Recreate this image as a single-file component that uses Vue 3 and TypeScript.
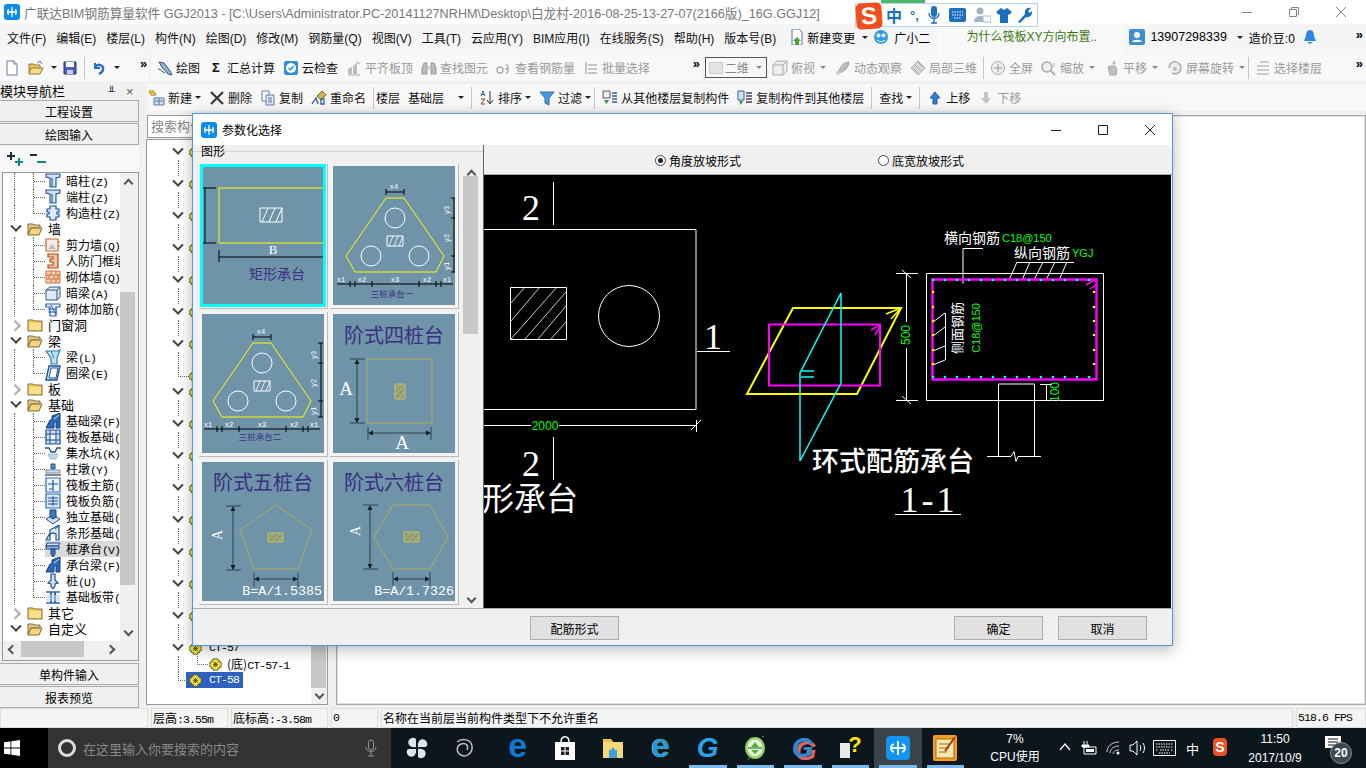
<template>
  <div class="app">
    <!-- shared icon sheet -->
    <svg class="sheet" width="0" height="0">
      <symbol id="doc" viewBox="0 0 16 16"><path d="M3 1h7l3 3v11H3z" fill="#fff" stroke="#6d7f99"/><path d="M10 1v3h3" fill="#dde" stroke="#6d7f99"/></symbol>
      <symbol id="open" viewBox="0 0 16 16"><path d="M1 4h5l1 1h5v8H1z" fill="#e8c064" stroke="#9a7a2c"/><path d="M3 8h12l-3 6H1z" fill="#f5dc8e" stroke="#9a7a2c"/><path d="M9 3l3-2 2 3" fill="none" stroke="#4a78b8"/></symbol>
      <symbol id="save" viewBox="0 0 16 16"><path d="M2 2h12v12H2z" fill="#4a5fb8" stroke="#27357a"/><path d="M4 2h8v5H4z" fill="#fff"/><path d="M5 10h6v4H5z" fill="#c9d0e8"/></symbol>
      <symbol id="undo" viewBox="0 0 16 16"><path d="M4 3v5h5" fill="none" stroke="#2e6fc0" stroke-width="2"/><path d="M4 7c3-4 9-2 8 3-.4 2-2 3-4 4" fill="none" stroke="#2e6fc0" stroke-width="2.4"/></symbol>
      <symbol id="draw" viewBox="0 0 16 16"><path d="M2 2l5 1 6 8 2 4-4-1-6-7z" fill="#8fb3dc" stroke="#36537c"/><path d="M1 9c3 0 4 3 7 4" fill="none" stroke="#36537c"/></symbol>
      <symbol id="cloud" viewBox="0 0 16 16"><rect x="1" y="1" width="14" height="14" rx="2" fill="#2f8fd8"/><circle cx="8" cy="8" r="5" fill="#fff"/><path d="M5.500 8l2 2 3-4" fill="none" stroke="#2f8fd8" stroke-width="1.400"/></symbol>
      <symbol id="align" viewBox="0 0 16 16"><path d="M2 9l4-2v7H2zM7 6l4-3v11H7z" fill="#bbb"/><path d="M2 15h12M10 2l4 2" stroke="#aaa" fill="none"/></symbol>
      <symbol id="binoc" viewBox="0 0 16 16"><path d="M3 3h3v11H1V8zM10 3h3l2 5v6h-5z" fill="#bbb" stroke="#999"/><path d="M6 6h4v3H6z" fill="#ccc"/></symbol>
      <symbol id="rebar" viewBox="0 0 16 16"><circle cx="4" cy="10" r="3" fill="none" stroke="#aaa" stroke-width="1.400"/><path d="M10 5c3 0 3 8 0 8M9 9h3" fill="none" stroke="#aaa" stroke-width="1.400"/></symbol>
      <symbol id="batch" viewBox="0 0 16 16"><path d="M2 2h2v12H2zM5 4h9v2H5zM5 8h9v2H5zM5 12h9v2H5z" fill="#c4c4c4"/></symbol>
      <symbol id="box3d" viewBox="0 0 16 16"><path d="M1 5l4-4h10v10l-4 4H1z" fill="#eee" stroke="#aaa"/><path d="M1 5h10v10M11 5l4-4" fill="none" stroke="#aaa"/></symbol>
      <symbol id="orbit" viewBox="0 0 16 16"><path d="M3 13C5 6 9 2 14 2c0 5-4 10-11 11z" fill="#bbb" stroke="#aaa"/><circle cx="3" cy="13" r="2" fill="#ccc"/></symbol>
      <symbol id="local" viewBox="0 0 16 16"><path d="M1 8l7-7 7 7-7 7z" fill="#d8d8d8" stroke="#aaa"/><path d="M5 5l6 6M8 2l5 5M3 8l5 5" stroke="#aaa"/></symbol>
      <symbol id="fit" viewBox="0 0 16 16"><circle cx="8" cy="8" r="6.500" fill="#eee" stroke="#aaa"/><path d="M8 4v8M4 8h8" stroke="#999"/></symbol>
      <symbol id="zoom" viewBox="0 0 16 16"><circle cx="6" cy="7" r="5" fill="#eee" stroke="#aaa" stroke-width="1.500"/><path d="M10 11l4 4" stroke="#aaa" stroke-width="2"/><path d="M13 3v4" stroke="#bbb"/></symbol>
      <symbol id="pan" viewBox="0 0 16 16"><path d="M4 7l2-1 5 0 2 3-1 6H6z" fill="#c0c0c0" stroke="#aaa"/><path d="M10 1v4M8 3h4" stroke="#aaa"/></symbol>
      <symbol id="rotate" viewBox="0 0 16 16"><path d="M2 8a6 6 0 1 1 3 5" fill="#eee" stroke="#aaa" stroke-width="1.500"/><circle cx="8" cy="9" r="2" fill="#bbb"/></symbol>
      <symbol id="floors" viewBox="0 0 16 16"><path d="M5 2h9M2 6h12M2 10h12M2 14h12" stroke="#bbb" stroke-width="1.500"/></symbol>
      <symbol id="new" viewBox="0 0 16 16"><path d="M5 8h10v7H5z" fill="#cfe0f2" stroke="#5b7ea8"/><path d="M5 11h10M10 8v7" stroke="#5b7ea8"/><path d="M3 1h3v3h3v3H6v0H3V4H0V1z" transform="translate(0 0) scale(.75)" fill="#eed040" stroke="#9a7d10"/></symbol>
      <symbol id="del" viewBox="0 0 16 16"><path d="M2 2l12 12M14 2L2 14" stroke="#3a3a3a" stroke-width="2.200"/></symbol>
      <symbol id="copy" viewBox="0 0 16 16"><path d="M2 1h7v10H2z" fill="#fff" stroke="#5a7aa8"/><path d="M6 5h8v10H6z" fill="#e2ecf8" stroke="#5a7aa8"/><path d="M8 8h4M8 10h4M8 12h4" stroke="#5a7aa8"/></symbol>
      <symbol id="rename" viewBox="0 0 16 16"><path d="M6 6l5-5 4 4-5 5z" fill="#d6b456" stroke="#7a6222"/><path d="M1 14l4-6 2 6M10 14V9h3v5z" fill="none" stroke="#2f5fa8" stroke-width="1.300"/></symbol>
      <symbol id="sort" viewBox="0 0 16 16"><path d="M11 1v12M8 10l3 4 3-4" fill="none" stroke="#333"/><path d="M2 6l2-5 2 5M3 4.500h2" fill="none" stroke="#2f5fa8"/><path d="M2 9h4l-4 5h4" fill="none" stroke="#a83030"/></symbol>
      <symbol id="filter" viewBox="0 0 16 16"><path d="M1 2h14L10 8v7l-4-2V8z" fill="#4a9ae0" stroke="#2f6ca8"/></symbol>
      <symbol id="from" viewBox="0 0 16 16"><path d="M1 1h7v7H1z" fill="#e8eef6" stroke="#556"/><path d="M2 10h5l-2.500 4z" fill="#2f9a3a"/><path d="M10 3h5M10 6h5M10 9h5M10 12h5" stroke="#2f5fa8" stroke-width="1.400"/></symbol>
      <symbol id="to" viewBox="0 0 16 16"><path d="M1 1h6v9H1z" fill="#cfe0f2" stroke="#2f5fa8"/><path d="M2 11h4l-2 4z" fill="#2f9a3a"/><path d="M9 3h6M9 6h6M9 9h6M9 12h6" stroke="#445" stroke-width="1.400"/></symbol>
      <symbol id="up" viewBox="0 0 16 16"><path d="M8 2l5 6h-3v6H6V8H3z" fill="#2e7fd0" stroke="#1e5fa8"/></symbol>
      <symbol id="down" viewBox="0 0 16 16"><path d="M8 14l5-6h-3V2H6v6H3z" fill="#c4c4c4"/></symbol>
      <symbol id="change" viewBox="0 0 16 16"><path d="M3 0h7l3 3v13H3z" fill="#fff" stroke="#4a7ab8"/><path d="M8 8l4 4h-2v4H6v-4H4z" fill="#4ea72e"/></symbol>
      <symbol id="gxe" viewBox="0 0 16 16"><circle cx="8" cy="8" r="7" fill="#2f9ee8"/><circle cx="5.500" cy="6.500" r="2" fill="#fff"/><circle cx="10.500" cy="6.500" r="2" fill="#fff"/><path d="M4 11c2 2 6 2 8 0" stroke="#fff" fill="none"/></symbol>
      <symbol id="user" viewBox="0 0 16 16"><rect width="16" height="16" rx="2" fill="#3f8fd0"/><circle cx="8" cy="6" r="3" fill="#fff"/><path d="M3 13c1-3 9-3 10 0z" fill="#fff"/></symbol>
      <symbol id="bell" viewBox="0 0 16 16"><path d="M8 1c3 0 4 3 4 6l2 5H2l2-5c0-3 1-6 4-6z" fill="#2e86e0"/><path d="M5 13h6l-3 2z" fill="#2e86e0"/></symbol>

      <symbol id="coltee" viewBox="0 0 16 16"><path d="M1 1h14v3l-4 1v9H5V5L1 4z" fill="#cfe3f7" stroke="#1e4f9a" stroke-width="1.100"/><path d="M7 5v9" stroke="#1e4f9a"/></symbol>
      <symbol id="gzz" viewBox="0 0 16 16"><path d="M5 1h6v3h3v3h-2v2h2v3h-3v3H5v-3H2V9h2V7H2V4h3z" fill="#dce9f7" stroke="#1e4f9a" stroke-width="1.200"/></symbol>
      <symbol id="shear" viewBox="0 0 16 16"><path d="M1 2h12v12H1z" fill="#f3ece4" stroke="#c8683a" stroke-width="1.200"/><path d="M3 12l4-5 4 5z" fill="#bbb"/><path d="M14 4v2M14 8v2" stroke="#c8683a"/></symbol>
      <symbol id="rfm" viewBox="0 0 16 16"><path d="M3 1h10v14H3v-3h5V9H5V6h3V4H3z" fill="#f2c49a" stroke="#a84a20" stroke-width="1.200"/></symbol>
      <symbol id="brick" viewBox="0 0 16 16"><path d="M1 2h14v12H1z" fill="#f4d2b2" stroke="#d0703c"/><path d="M1 6h14M1 10h14M6 2v4M11 2v4M4 6v4M9 6v4M13 6v4M6 10v4M11 10v4" stroke="#d0703c"/></symbol>
      <symbol id="ab" viewBox="0 0 16 16"><path d="M1 5l4-3h10v10l-3 3H1z" fill="#dfe9f4" stroke="#33557f"/><path d="M1 5h11v10M12 5l3-3" fill="none" stroke="#33557f"/></symbol>
      <symbol id="rein" viewBox="0 0 16 16"><path d="M1 3h14v3h-4v9H5V6H1z" fill="#eef4fb" stroke="#1e5fc0" stroke-width="1.200"/><path d="M3 8h9M3 11h9M6 4l5 10" stroke="#1e5fc0"/></symbol>
      <symbol id="beam" viewBox="0 0 16 16"><path d="M1 2h12l2-1-3 8v6H6V9z" fill="#bfe0f4" stroke="#2f7fb8" stroke-width="1.200"/><path d="M6 2l3 7" stroke="#2f7fb8"/></symbol>
      <symbol id="ring" viewBox="0 0 16 16"><path d="M4 1h11l-3 14H1z" fill="#dde9f7" stroke="#1e4f9a" stroke-width="1.400"/><path d="M6 3h7l-2 10H4z" fill="#fff" stroke="#1e4f9a"/></symbol>
      <symbol id="fbeam" viewBox="0 0 16 16"><path d="M1 15l4-8 2 0V3l8-3v15h-4V8l-2 2v5z" fill="#2a6ab8" stroke="#123f80"/><path d="M9 6l5-4" stroke="#cfe3f7"/></symbol>
      <symbol id="raft" viewBox="0 0 16 16"><path d="M1 1h14v14H1z" fill="#cfe0f2" stroke="#1e4f9a" stroke-width="1.200"/><path d="M5 1v14M11 1v14M1 5h14M1 11h14" stroke="#1e4f9a"/><path d="M6 6h4v4H6z" fill="#fff"/></symbol>
      <symbol id="pit" viewBox="0 0 16 16"><path d="M0 3h4l2 4h4l2-4h4" fill="none" stroke="#1e4f9a" stroke-width="1.300"/><path d="M3 9h10l-2 5H5z" fill="#bcd6ee" stroke="#7aa0c8" stroke-dasharray="1 1"/></symbol>
      <symbol id="pier" viewBox="0 0 16 16"><path d="M6 3h4v5H6z" fill="#5a86c0" stroke="#1e4f9a"/><path d="M1 9h14v3H1z" fill="#cfe0f2" stroke="#7a8aa0"/><path d="M0 14h16" stroke="#888" stroke-width="2"/></symbol>
      <symbol id="raftm" viewBox="0 0 16 16"><path d="M1 1h14v14H1z" fill="#eef4fb" stroke="#2a6ab8" stroke-width="1.200"/><path d="M8 3v11M3 7h10M4 12h3" stroke="#1e4f9a" stroke-width="1.200"/></symbol>
      <symbol id="raftn" viewBox="0 0 16 16"><path d="M1 1h14v14H1z" fill="#dbe8f6" stroke="#2a6ab8" stroke-width="1.200"/><path d="M8 3v10M3 8h10M3 5h10M3 11h10" stroke="#1e4f9a"/></symbol>
      <symbol id="iso" viewBox="0 0 16 16"><path d="M1 10l7-4 7 4-7 5z" fill="#cfe0f2" stroke="#1e4f9a"/><path d="M5 1h6v7l-3 2-3-2z" fill="#3f76b8" stroke="#123f80"/></symbol>
      <symbol id="strip" viewBox="0 0 16 16"><path d="M1 15l4-7V5l9-5v15h-3V9l-3-1-3 1v6z" fill="#dbe8f6" stroke="#1e4f9a" stroke-width="1.200"/><path d="M10 4l4-3" stroke="#1e4f9a"/></symbol>
      <symbol id="cap" viewBox="0 0 16 16"><path d="M2 2h13l-2 3H1z" fill="#cfe0f2" stroke="#1e4f9a"/><path d="M1 5h13v3H1z" fill="#8fb0d8" stroke="#1e4f9a"/><path d="M6 8h4v5l-2 3-2-3z" fill="#3f76b8" stroke="#123f80"/></symbol>
      <symbol id="pile" viewBox="0 0 16 16"><path d="M6 1h4v6l3 3-3 1v2l-2 3-2-3v-2l-3-1 3-3z" fill="#cfe0f2" stroke="#1e4f9a" stroke-width="1.200"/></symbol>
      <symbol id="band" viewBox="0 0 16 16"><path d="M1 3h14M1 14h14" stroke="#2a6ab8" stroke-width="1.500"/><path d="M6 3v11M10 3v11" stroke="#2a6ab8" stroke-width="2"/><path d="M1 6h14v6H1z" fill="#bcd6ee" opacity=".6"/></symbol>
      <symbol id="sun" viewBox="0 0 16 16"><path d="M5 1h6v2h2v2h2v6h-2v2h-2v2H5v-2H3v-2H1V5h2V3h2z" fill="#f4e040" stroke="#505018"/><path d="M5 8h6M8 5v6M5 5l6 6M11 5l-6 6" stroke="#505018"/></symbol>
      <symbol id="fold" viewBox="0 0 16 16"><path d="M1 3h5l1 1h8v10H1z" fill="#f6cf5c" stroke="#7a6a40"/><path d="M2 6h12v7H2z" fill="#fae08a"/></symbol>
      <symbol id="foldo" viewBox="0 0 16 16"><path d="M1 3h5l1 1h6v3H4l-3 7z" fill="#e6cb88" stroke="#7a6a40"/><path d="M4 7h11l-3 7H1z" fill="#f6d574" stroke="#7a6a40"/></symbol>
      <defs>
        <!-- three pile thumb geometry -->
        <g id="tri3">
          <path d="M53 32h18l40 58-8 16H22l-9-16z" fill="none" stroke="#ff0" />
          <g fill="none" stroke="#fff"><circle cx="62" cy="52" r="10" /><circle cx="38" cy="90" r="10" /><circle cx="86" cy="90" r="10" /><path d="M54 70h16v10H54z" /><path d="M56 80l4-10M61 80l4-10M66 80l4-10" stroke-width=".8" /></g>
          <path d="M53 26h18M53 23v6M71 23v6M121 32v74M118 32h5M118 52h5M118 90h5M118 106h5M4 118h116M17 115v6M22 115v6M39 115v6M86 115v6M103 115v6M108 115v6" fill="none" stroke="#000" />
          <g fill="#fff" font-size="7" font-family="Liberation Mono, monospace">
            <text x="61" y="23" text-anchor="middle">x4</text><text x="8" y="116" text-anchor="middle">x1</text><text x="29" y="116" text-anchor="middle">x2</text><text x="62" y="116" text-anchor="middle">x3</text><text x="94" y="116" text-anchor="middle">x2</text><text x="114" y="116" text-anchor="middle">x1</text>
            <text transform="translate(116 44) rotate(-90)" text-anchor="middle">y3</text><text transform="translate(116 72) rotate(-90)" text-anchor="middle">y2</text><text transform="translate(116 100) rotate(-90)" text-anchor="middle">y1</text>
          </g>
        </g>
      </defs>
    </svg>

    <header class="titlebar">
      <span class="app-logo">
        <svg viewBox="0 0 16 16" width="16" height="16"><rect width="16" height="16" rx="3" fill="#0d8bf0"/><path d="M8 3v10M3.500 8h9M5 5.500C3 6 3 10 5 10.500M11 5.500c2 .5 2 4.500 0 5" fill="none" stroke="#fff" stroke-width="1.300"/></svg>
      </span>
      <span class="title-text">广联达BIM钢筋算量软件 GGJ2013 - [C:\Users\Administrator.PC-20141127NRHM\Desktop\白龙村-2016-08-25-13-27-07(2166版)_16G.GGJ12]</span>
      <span class="win-btns">
        <svg width="14" height="14" viewBox="0 0 14 14"><path d="M2 7.500h10" stroke="#888"/></svg>
        <svg width="14" height="14" viewBox="0 0 14 14"><path d="M2.500 4.500h7v7h-7zM4.500 4.500v-2h7v7h-2" fill="none" stroke="#888"/></svg>
        <svg width="14" height="14" viewBox="0 0 14 14"><path d="M2 2l10 10M12 2L2 12" stroke="#888"/></svg>
      </span>
    </header>

    <nav class="menubar">
      <span v-for="m in menus" :key="m" class="menu-item">{{ m }}</span>
      <span class="menu-tool first"><svg class="ic"><use href="#change" /></svg>新建变更<i class="caret"></i></span>
      <span class="menu-tool second"><svg class="ic"><use href="#gxe" /></svg>广小二</span>
      <span class="news">为什么筏板XY方向布置..</span>
      <span class="account">
        <svg class="ic"><use href="#user" /></svg><span class="phone">13907298339</span><i class="caret"></i>
        <span class="beans">造价豆:0</span>
        <svg class="ic bell"><use href="#bell" /></svg>
      </span>
      <span class="more menu-more">»</span>
    </nav>

    <div class="toolrow">
      <div class="seg seg-file">
        <svg class="ic"><use href="#doc" /></svg>
        <svg class="ic open"><use href="#open" /></svg><i class="caret"></i>
        <svg class="ic save"><use href="#save" /></svg>
        <span class="vsep"></span>
        <svg class="ic"><use href="#undo" /></svg><i class="caret"></i>
        <span class="more">»</span>
      </div>
      <div class="seg seg-draw">
        <span v-for="t in drawTools" :key="t.text" class="tool" :class="{ off: t.off }">
          <svg v-if="t.ic" class="ic"><use :href="'#' + t.ic" /></svg>
          <b v-else class="sigma">Σ</b>{{ t.text }}
        </span>
        <span class="more push">»</span>
      </div>
      <div class="seg seg-view">
        <span class="dim-box"><i class="swatch"></i>二维<i class="caret gray"></i></span>
        <template v-for="t in viewTools" :key="t.text">
          <span class="tool off"><svg class="ic"><use :href="'#' + t.ic" /></svg>{{ t.text }}<i v-if="t.arrow" class="caret gray"></i></span>
          <span v-if="t.sep" class="vsep" :class="{ tight: t.arrow }"></span>
        </template>
        <span class="more push">»</span>
      </div>
    </div>

    <div class="workspace">
      <aside class="nav">
        <div class="nav-head"><span>模块导航栏</span><span class="pin">╨</span><span class="x">×</span></div>
        <button class="nav-btn">工程设置</button>
        <button class="nav-btn">绘图输入</button>
        <div class="tree-tools">
          <svg width="40" height="16" viewBox="0 0 40 16"><path d="M4 1v8M0 5h8" stroke="#16323a" stroke-width="2"/><path d="M12 7v8M8 11h8" stroke="#0a8a8a" stroke-width="2"/><path d="M23 4h7" stroke="#16323a" stroke-width="2"/><path d="M30 11h9" stroke="#0a8a8a" stroke-width="2"/></svg>
        </div>
        <div class="tree-box">
          <div class="tree-view">
            <div v-for="r in navRows" :key="r.text" class="row" :class="{ group: r.group, hot: r.hot }">
              <template v-if="r.group">
                <span class="chev" :class="{ closed: !r.open }"></span>
                <svg class="ic folder"><use :href="r.open ? '#foldo' : '#fold'" /></svg>
                <span class="group-name">{{ r.text }}</span>
              </template>
              <template v-else>
                <span class="guide" :class="{ last: r.last }"></span>
                <span class="leaf" :class="{ hot: r.hot }"><svg class="ic"><use :href="'#' + r.ic" /></svg><span class="leaf-name">{{ nameOf(r.text) }}<span class="code">{{ codeOf(r.text) }}</span></span></span>
              </template>
            </div>
          </div>
          <div class="vbar"><span class="sb-up"></span><span class="thumb"></span><span class="sb-down"></span></div>
          <div class="hbar"><span class="sb-left"></span><span class="hthumb"></span><span class="sb-right"></span></div>
        </div>
        <button class="nav-btn">单构件输入</button>
        <button class="nav-btn">报表预览</button>
      </aside>

      <section class="content">
        <div class="bar2">
          <template v-for="t in editTools" :key="t.text">
            <span class="tool" :class="{ off: t.off, near: t.near, combo: t.combo }"><svg v-if="t.ic" class="ic"><use :href="'#' + t.ic" /></svg>{{ t.text }}<i v-if="t.arrow" class="caret"></i></span>
            <span v-if="t.sep" class="vsep" :class="{ tight: t.tight }"></span>
          </template>
        </div>
        <div class="panes">
          <div class="list-pane">
            <div class="search">搜索构件...</div>
            <div class="list-box">
              <div class="list-tree">
                <template v-for="(r, i) in listRows" :key="i">
                  <div v-if="r === 'g'" class="lrow"><span class="chev"></span><svg class="ic small"><use href="#sun" /></svg></div>
                  <div v-else-if="r === 'v'" class="lrow"><span class="ldots"></span></div>
                  <div v-else class="lrow"><span class="ldots elbow"></span><svg class="ic small"><use href="#sun" /></svg></div>
                </template>
                <div class="lrow"><span class="chev"></span><svg class="ic small"><use href="#sun" /></svg><span class="ct">CT-57</span></div>
                <div class="lrow child"><span class="ldots"></span><span class="ldots elbow2"></span><svg class="ic small"><use href="#sun" /></svg><span class="ct"><span class="zh">(底)</span>CT-57-1</span></div>
                <div class="lrow sel-row"><span class="ldots elbow"></span><span class="sel"><svg class="ic small"><use href="#sun" /></svg><span class="ct">CT-58</span></span></div>
              </div>
              <div class="list-bar"><span class="list-thumb"></span><span class="sb-down"></span></div>
            </div>
          </div>
          <div class="canvas-pane"></div>
        </div>
      </section>
    </div>

    <footer class="status">
      <span class="cell c1"></span>
      <span class="cell c2"><span class="zh">层高</span>:3.55m</span>
      <span class="cell c3"><span class="zh">底标高</span>:-3.58m</span>
      <span class="cell c4">0</span>
      <span class="cell c5 zh">名称在当前层当前构件类型下不允许重名</span>
      <span class="cell c6">518.6 FPS</span>
    </footer>

    <div class="taskbar">
      <span class="start"><svg width="16" height="16" viewBox="0 0 16 16"><path d="M0 2.300l6.500-.9v6.200H0zM7.300 1.300L16 0v7.600H7.300zM0 8.400h6.500v6.200L0 13.700zM7.300 8.400H16V16l-8.700-1.200z" fill="#fff"/></svg></span>
      <span class="tsearch">
        <i class="cortana"></i><span>在这里输入你要搜索的内容</span>
        <svg class="mic" width="12" height="18" viewBox="0 0 12 18"><rect x="3.500" y="1" width="5" height="10" rx="2.500" fill="none" stroke="#999"/><path d="M1 8c0 6 10 6 10 0M6 13v4M3 17h6" fill="none" stroke="#999"/></svg>
      </span>
      <div class="tasks">
        <span v-for="a in taskApps" :key="a.id" class="task" :class="{ active: a.active, run: a.run }">
          <svg v-if="a.id === 'fan'" width="24" height="24" viewBox="0 0 24 24"><path d="M11 11C4 12 2 7 4 4s7-3 7 0zM13 11c-1-7 4-9 7-7s3 7 0 7zM13 13c7-1 9 4 7 7s-7 3-7 0zM11 13c1 7-4 9-7 7s-3-7 0-7z" fill="#dfe6e8"/></svg>
          <svg v-else-if="a.id === 'swirl'" width="24" height="24" viewBox="0 0 24 24"><path d="M5 6c5-4 14-3 15 4s-6 12-11 9-5-9 0-11 8 2 6 6" fill="none" stroke="#b9c0c4" stroke-width="1.500"/></svg>
          <span v-else-if="a.id === 'edge'" class="glyph edge">e</span>
          <svg v-else-if="a.id === 'store'" width="22" height="26" viewBox="0 0 22 26"><path d="M1 7h20v18H1z" fill="#fff"/><path d="M7 7c0-7 8-7 8 0" fill="none" stroke="#fff" stroke-width="1.500"/><path d="M7 12h3.500v3.500H7zM11.500 12H15v3.500h-3.500zM7 16.500h3.500V20H7zM11.500 16.500H15V20h-3.500z" fill="#1a1f22"/></svg>
          <svg v-else-if="a.id === 'files'" width="24" height="24" viewBox="0 0 24 24"><path d="M2 3h8l2 3h10v16H2z" fill="#f6d878"/><path d="M2 3h8l2 3H2z" fill="#f0c040"/><path d="M8 14h8v8H8z" fill="#3ba0e0"/><path d="M10 14l2-3 2 3z" fill="#3ba0e0"/></svg>
          <span v-else-if="a.id === 'ie'" class="glyph ie">e</span>
          <span v-else-if="a.id === 'g1'" class="glyph gg">G</span>
          <svg v-else-if="a.id === 'green'" width="24" height="26" viewBox="0 0 24 26"><ellipse cx="12" cy="13" rx="10" ry="11" fill="#8fd468"/><ellipse cx="12" cy="13" rx="7.500" ry="8.500" fill="#e8f6e0"/><path d="M5 13h14" stroke="#4c9a30" stroke-width="1.500"/><path d="M12 7l4 5H8zM8 15h8l-4 4z" fill="#55aa38"/><path d="M6 23l-1 2M19 2l2-1" stroke="#2f7a20" stroke-width="1.500"/></svg>
          <span v-else-if="a.id === 'g2'" class="glyph gg red">G</span>
          <span v-else-if="a.id === 'help'" class="helpq"><i></i><b>?</b></span>
          <svg v-else-if="a.id === 'gld'" width="24" height="24" viewBox="0 0 24 24"><rect width="24" height="24" rx="4" fill="#1194f2"/><path d="M12 5v14M5 12h14M8 8C4 9 4 15 8 16M16 8c4 1 4 7 0 8" fill="none" stroke="#fff" stroke-width="1.800"/></svg>
          <svg v-else width="24" height="26" viewBox="0 0 24 26"><rect width="24" height="26" rx="2" fill="#f2a020"/><rect x="3" y="4" width="18" height="19" fill="#fbe6b0" stroke="#b06a10"/><path d="M6 9h10M6 13h10M6 17h8" stroke="#a06818"/><path d="M22 2L12 16" stroke="#b03018" stroke-width="2"/></svg>
        </span>
      </div>
      <span class="cpu"><span>7%</span><span>CPU使用</span></span>
      <span class="tray">
        <svg width="12" height="8" viewBox="0 0 12 8"><path d="M1 7l5-6 5 6" fill="none" stroke="#fff" stroke-width="1.200"/></svg>
        <svg class="t-power" width="16" height="16" viewBox="0 0 16 16"><path d="M3 1v4M6 1v4M1 5h7v2H1z" stroke="#fff" fill="#fff"/><path d="M3 7h12v7H3z" fill="none" stroke="#fff"/><path d="M5 9h8v3H5z" fill="#fff"/></svg>
        <svg class="t-wifi" width="18" height="16" viewBox="0 0 18 16"><path d="M1 12C1 6 6 2 13 2M4 13c0-4 4-7 9-7M7 14c0-2 2-4 6-4" fill="none" stroke="#ccc"/><circle cx="12" cy="13" r="1.500" fill="#fff"/></svg>
        <svg class="t-vol" width="18" height="16" viewBox="0 0 18 16"><path d="M1 5h3l4-4v14l-4-4H1z" fill="none" stroke="#fff"/><path d="M11 5c1 2 1 4 0 6M14 3c2 3 2 7 0 10" fill="none" stroke="#fff"/></svg>
        <svg class="t-kbd" width="23" height="16" viewBox="0 0 23 16"><path d="M.5.500h22v15H.5z" fill="none" stroke="#fff"/><path d="M3 4h17M3 7h17M3 10h2M7 10h9M18 10h2M6 13h11" stroke="#fff" stroke-dasharray="1.500 1"/></svg>
        <span class="t-ime">中</span>
        <span class="t-s">S</span>
      </span>
      <span class="clock"><span>11:50</span><span>2017/10/9</span></span>
      <span class="notify">
        <svg width="16" height="16" viewBox="0 0 16 16"><path d="M0 0h16v12H0z" fill="#fff"/><path d="M3 3h10M3 6h10M3 9h10" stroke="#111"/></svg>
        <b class="badge">20</b>
      </span>
    </div>

    <!-- floating IME bar -->
    <div class="ime">
      <span class="ime-tab"></span>
      <span class="ime-s">S</span>
      <span class="ime-zh">中</span>
      <span class="ime-dot">°,</span>
      <svg width="14" height="18" viewBox="0 0 14 18"><rect x="4" y="0" width="6" height="11" rx="3" fill="#1a6fc0"/><path d="M2 7c0 7 10 7 10 0M7 13v4M4 17h6" fill="none" stroke="#1a6fc0" stroke-width="1.400"/></svg>
      <svg width="17" height="14" viewBox="0 0 17 14"><rect width="17" height="14" rx="2" fill="#1a6fc0"/><path d="M3 4h11M3 7h11M5 10h7" stroke="#fff" stroke-dasharray="1.500 1"/></svg>
      <svg width="17" height="16" viewBox="0 0 17 16"><circle cx="6" cy="4" r="3.500" fill="#9fb6c8"/><path d="M0 15c0-8 12-8 12 0z" fill="#9fb6c8"/><rect x="9" y="9" width="8" height="6" fill="#fff" stroke="#9fb6c8"/></svg>
      <svg class="ime-pull" width="16" height="15" viewBox="0 0 16 15"><path d="M5 0l3 2 3-2 5 4-3 3-1-1v9H4V6L3 7 0 4z" fill="#1a6fc0"/></svg>
      <svg class="ime-pull" width="15" height="16" viewBox="0 0 15 16"><path d="M1 15l7-8c-1-4 2-7 6-6l-3 3 2 2 2-2c1 4-3 7-6 6l-6 6z" fill="#1a6fc0"/></svg>
    </div>

    <!-- parametric selection dialog -->
    <div class="dialog">
      <div class="dlg-title">
        <svg width="16" height="16" viewBox="0 0 16 16"><rect width="16" height="16" rx="3" fill="#0d8bf0"/><path d="M8 3v10M3.500 8h9M5 5.500C3 6 3 10 5 10.500M11 5.500c2 .5 2 4.500 0 5" fill="none" stroke="#fff" stroke-width="1.300"/></svg>
        <span class="dlg-name">参数化选择</span>
        <span class="dlg-btns">
          <svg width="12" height="12" viewBox="0 0 12 12"><path d="M1 6.500h10" stroke="#222"/></svg>
          <svg width="12" height="12" viewBox="0 0 12 12"><path d="M1.500 1.500h9v9h-9z" fill="none" stroke="#222"/></svg>
          <svg width="12" height="12" viewBox="0 0 12 12"><path d="M1 1l10 10M11 1L1 11" stroke="#222"/></svg>
        </span>
      </div>
      <div class="dlg-body">
        <div class="shapes">
          <div class="legend"><span>图形</span></div>
          <div class="shape-wrap">
            <div class="grid">
              <div class="cell-t chosen">
                <svg class="thumb-svg" viewBox="0 0 122 139">
                  <path d="M122 22H17v55h105" class="yl" />
                  <path d="M0 22h14M3 22v55M0 77h14M17 84v12M17 91h105" class="bk" />
                  <g class="hatch"><path d="M58 42h22v14H58z" /><path d="M60 56l6-14M67 56l6-14M74 56l6-14" /></g>
                  <text x="71" y="88" class="wt" text-anchor="middle">B</text>
                  <text x="75" y="113" class="blue f16" text-anchor="middle">矩形承台</text>
                </svg>
              </div>
              <div class="cell-t">
                <svg class="thumb-svg" viewBox="0 0 122 139">
                  <use href="#tri3" />
                  <text x="59" y="131" class="blue f12" text-anchor="middle">三桩承台一</text>
                </svg>
              </div>
              <div class="cell-t">
                <svg class="thumb-svg" viewBox="0 0 122 139">
                  <use href="#tri3" transform="translate(-2 -3)" />
                  <text x="58" y="126" class="blue f12" text-anchor="middle">三桩承台二</text>
                </svg>
              </div>
              <div class="cell-t">
                <svg class="thumb-svg" viewBox="0 0 122 139">
                  <text x="61" y="29" class="blue f20" text-anchor="middle">阶式四桩台</text>
                  <path d="M34 45h65v64H34z" class="ol" />
                  <path d="M62 70h10v15H62z" class="ol2" />
                  <path d="M62 76l6-6M62 81l10-10M65 85l7-8" class="ol3" />
                  <path d="M17 45h15M17 109h15M24 47v60M35 113v13M98 113v13M37 119h60" class="dk" />
                  <path d="M24 45l-2.500 5h5zM24 109l-2.500-5h5zM35 119l5-2.500v5zM98 119l-5-2.500v5z" class="ar" />
                  <text x="13" y="81" class="wt f18" text-anchor="middle">A</text>
                  <text x="69" y="135" class="wt f18" text-anchor="middle">A</text>
                </svg>
              </div>
              <div class="cell-t">
                <svg class="thumb-svg" viewBox="0 0 122 139">
                  <text x="61" y="28" class="blue f20" text-anchor="middle">阶式五桩台</text>
                  <path d="M74 43l36 25-14 39H52L38 68z" class="ol" />
                  <path d="M66 71h15v9H66z" class="ol2" />
                  <path d="M66 78l6-7M70 80l8-9M76 80l5-6" class="ol3" />
                  <path d="M24 44h15M24 108h15M31 46v60M52 111v14M96 111v14M54 117h40" class="dk" />
                  <path d="M31 44l-2.500 5h5zM31 108l-2.500-5h5zM52 117l5-2.500v5zM96 117l-5-2.500v5z" class="ar" />
                  <text x="15" y="73" class="wt f16" text-anchor="middle" transform="rotate(-90 15 73)" dy="5">A</text>
                  <text x="120" y="133" class="wm" text-anchor="end">B=A/1.5385</text>
                </svg>
              </div>
              <div class="cell-t">
                <svg class="thumb-svg" viewBox="0 0 122 139">
                  <text x="61" y="28" class="blue f20" text-anchor="middle">阶式六桩台</text>
                  <path d="M60 43h37l18 32-18 32H60L41 75z" class="ol" />
                  <path d="M71 70h15v10H71z" class="ol2" />
                  <path d="M71 78l7-8M75 80l9-10M81 80l5-6" class="ol3" />
                  <path d="M30 43h15M30 107h15M37 45v60M60 110v14M97 110v14M62 117h33" class="dk" />
                  <path d="M37 43l-2.500 5h5zM37 107l-2.500-5h5zM60 117l5-2.500v5zM97 117l-5-2.500v5z" class="ar" />
                  <text x="22" y="69" class="wt f16" text-anchor="middle" transform="rotate(-90 22 69)" dy="5">A</text>
                  <text x="121" y="133" class="wm" text-anchor="end">B=A/1.7326</text>
                </svg>
              </div>
              <div class="cell-t"></div>
              <div class="cell-t"></div>
            </div>
            <div class="shape-bar"><span class="sb-up"></span><span class="shape-thumb"></span><span class="sb-down"></span></div>
          </div>
        </div>
        <div class="preview">
          <div class="radios">
            <label class="radio"><i class="dot on"></i>角度放坡形式</label>
            <label class="radio"><i class="dot"></i>底宽放坡形式</label>
          </div>
          <svg class="cad" viewBox="484 175 687 433" width="687" height="433">
            <rect x="484" y="175" width="687" height="433" fill="#000" />
            <!-- plan view -->
            <g fill="none" stroke="#fff">
              <path d="M553.500 182v43M484 229.500h212v180H484M553.500 437v43M697 351.500h33" />
              <path d="M510.500 287.500h56v52h-56z" />
              <path d="M511 303l14-16M511 321l29-34M511 339l46-52M525 339l41-47M538 339l28-33M551 339l15-17" stroke-width=".8" />
              <circle cx="629" cy="316" r="30.500" />
              <path d="M484 425.500h212M696.500 420v12M691 430l10-10" />
            </g>
            <rect x="531" y="418" width="28" height="14" fill="#000" />
            <text x="545" y="430" class="green" font-size="12" text-anchor="middle">2000</text>
            <text x="531" y="220" class="cad-t" font-size="36" text-anchor="middle">2</text>
            <text x="531" y="476" class="cad-t" font-size="36" text-anchor="middle">2</text>
            <text x="713" y="349" class="cad-t" font-size="36" text-anchor="middle">1</text>
            <text x="578" y="510" class="cad-c" font-size="32" text-anchor="end">矩形承台</text>

            <!-- slab sketch -->
            <path d="M793 308h108l-44 86H747z" fill="none" stroke="#ff0" stroke-width="2" />
            <path d="M886 314l15-6M891 319l10-11" stroke="#ff0" stroke-width="1.500" />
            <path d="M769 324.500h111v61H769z" fill="none" stroke="#f0f" stroke-width="2" />
            <path d="M871 330l9-5M875 335l5-8" stroke="#f0f" stroke-width="1.500" />
            <path d="M841 293v90l-41 78v-88zM801 371h13M801 377h13" fill="none" stroke="#0ff" stroke-width="1.500" />

            <!-- ring section -->
            <g fill="none" stroke="#fff">
              <path d="M926.500 273.500h177v127h-177zM896 273.500h22M896 400.500h22M906.500 274v126M902 270l9 8M902 396l9 8" />
              <path d="M983 248.500h-20v35M1017 262.500h57M1017 262l-8 18M1030 262l-8 18M1043 262l-9 18M1055 262l-9 18M1067 262l-8 18" />
              <path d="M945.500 313v47M945 313l-12 9M945 327l-12 9M945 346l-12 5M945 360l-12 5" />
              <path d="M998.500 384h36M998.500 384v72M1034.500 384v72M987 456.500h24l3-5 2 10 2-5h23" />
              <path d="M1046.500 384v16M1040 384.500h12M1040 400.500h12" />
              <path d="M895 514.500h66" />
            </g>
            <path d="M932.500 279.500h164v100h-164z" fill="none" stroke="#f0f" stroke-width="2.400" />
            <path d="M1086 285l10-6M1090 289l7-5" stroke="#f0f" stroke-width="1.500" />
            <g fill="#0ff">
              <circle v-for="x in topDots" :key="'t' + x" :cx="x" cy="280" r="1.300" />
              <circle v-for="x in topDots" :key="'b' + x" :cx="x" cy="377" r="1.300" />
            </g>
            <g fill="#ff0">
              <circle v-for="y in sideDots" :key="'l' + y" cx="933" :cy="y" r="1.300" />
              <circle v-for="y in sideDots" :key="'r' + y" cx="1094" :cy="y" r="1.300" />
            </g>
            <rect x="899" y="322" width="14" height="26" fill="#000" />
            <text x="0" y="0" class="green" font-size="12" text-anchor="middle" transform="translate(910 335) rotate(-90)">500</text>
            <text x="0" y="0" class="green" font-size="12" text-anchor="middle" transform="translate(1059 392) rotate(-90)">100</text>
            <text x="944" y="243" class="cad-c" font-size="14">横向钢筋</text>
            <text x="1002" y="242" class="green" font-size="11">C18@150</text>
            <text x="1014" y="258" class="cad-c" font-size="14">纵向钢筋</text>
            <text x="1072" y="257" class="green" font-size="11">YGJ</text>
            <text x="0" y="0" class="cad-c" font-size="13" text-anchor="middle" transform="translate(962 328) rotate(-90)">侧面钢筋</text>
            <text x="0" y="0" class="green" font-size="11" text-anchor="middle" transform="translate(980 328) rotate(-90)">C18@150</text>
            <text x="812" y="471" class="cad-c bold" font-size="27">环式配筋承台</text>
            <text x="929" y="512" class="cad-t wide" font-size="36" text-anchor="middle">1-1</text>
          </svg>
        </div>
      </div>
      <div class="dlg-foot">
        <button class="dlg-btn form">配筋形式</button>
        <button class="dlg-btn ok">确定</button>
        <button class="dlg-btn">取消</button>
      </div>
    </div>
  </div>
</template>

<script setup lang="ts">
interface Tool { text: string; ic?: string; off?: boolean; arrow?: boolean; sep?: boolean; near?: boolean; combo?: boolean; tight?: boolean }
interface NavRow { text: string; group?: boolean; open?: boolean; ic?: string; last?: boolean; hot?: boolean }

const menus = ['文件(F)', '编辑(E)', '楼层(L)', '构件(N)', '绘图(D)', '修改(M)', '钢筋量(Q)', '视图(V)', '工具(T)', '云应用(Y)', 'BIM应用(I)', '在线服务(S)', '帮助(H)', '版本号(B)']

const drawTools: Tool[] = [
  { text: '绘图', ic: 'draw' },
  { text: '汇总计算' },
  { text: '云检查', ic: 'cloud' },
  { text: '平齐板顶', ic: 'align', off: true },
  { text: '查找图元', ic: 'binoc', off: true },
  { text: '查看钢筋量', ic: 'rebar', off: true },
  { text: '批量选择', ic: 'batch', off: true }
]

const viewTools: Tool[] = [
  { text: '俯视', ic: 'box3d', arrow: true },
  { text: '动态观察', ic: 'orbit' },
  { text: '局部三维', ic: 'local', sep: true },
  { text: '全屏', ic: 'fit' },
  { text: '缩放', ic: 'zoom', arrow: true },
  { text: '平移', ic: 'pan', arrow: true },
  { text: '屏幕旋转', ic: 'rotate', arrow: true, sep: true },
  { text: '选择楼层', ic: 'floors' }
]

const editTools: Tool[] = [
  { text: '新建', ic: 'new', arrow: true },
  { text: '删除', ic: 'del' },
  { text: '复制', ic: 'copy' },
  { text: '重命名', ic: 'rename', sep: true },
  { text: '楼层', near: true },
  { text: '基础层', arrow: true, sep: true, combo: true },
  { text: '排序', ic: 'sort', arrow: true },
  { text: '过滤', ic: 'filter', arrow: true, sep: true, tight: true },
  { text: '从其他楼层复制构件', ic: 'from' },
  { text: '复制构件到其他楼层', ic: 'to', sep: true },
  { text: '查找', arrow: true, sep: true },
  { text: '上移', ic: 'up' },
  { text: '下移', ic: 'down', off: true }
]

const navRows: NavRow[] = [
  { text: '暗柱(Z)', ic: 'coltee' },
  { text: '端柱(Z)', ic: 'coltee' },
  { text: '构造柱(Z)', ic: 'gzz', last: true },
  { text: '墙', group: true, open: true },
  { text: '剪力墙(Q)', ic: 'shear' },
  { text: '人防门框墙(RF)', ic: 'rfm' },
  { text: '砌体墙(Q)', ic: 'brick' },
  { text: '暗梁(A)', ic: 'ab' },
  { text: '砌体加筋(Y)', ic: 'rein', last: true },
  { text: '门窗洞', group: true },
  { text: '梁', group: true, open: true },
  { text: '梁(L)', ic: 'beam' },
  { text: '圈梁(E)', ic: 'ring', last: true },
  { text: '板', group: true },
  { text: '基础', group: true, open: true },
  { text: '基础梁(F)', ic: 'fbeam' },
  { text: '筏板基础(M)', ic: 'raft' },
  { text: '集水坑(K)', ic: 'pit' },
  { text: '柱墩(Y)', ic: 'pier' },
  { text: '筏板主筋(R)', ic: 'raftm' },
  { text: '筏板负筋(X)', ic: 'raftn' },
  { text: '独立基础(P)', ic: 'iso' },
  { text: '条形基础(T)', ic: 'strip' },
  { text: '桩承台(V)', ic: 'cap', hot: true },
  { text: '承台梁(F)', ic: 'fbeam' },
  { text: '桩(U)', ic: 'pile' },
  { text: '基础板带(W)', ic: 'band', last: true },
  { text: '其它', group: true },
  { text: '自定义', group: true, open: true }
]

// the latin part of a tree label is half width in the original font
const nameOf = (s: string) => s.split('(')[0]
const codeOf = (s: string) => s.slice(s.indexOf('('))

// 7 groups, one child, then 8 more groups in the list behind the dialog
const listRows: string[] = []
for (let i = 0; i < 7; i++) listRows.push('g', 'v')
listRows.push('c')
for (let i = 0; i < 8; i++) listRows.push('g', 'v')

const taskApps = [
  { id: 'fan' }, { id: 'swirl' }, { id: 'edge' }, { id: 'store' }, { id: 'files' }, { id: 'ie' },
  { id: 'g1', run: true }, { id: 'green', run: true }, { id: 'g2', run: true }, { id: 'help', run: true },
  { id: 'gld', run: true, active: true }, { id: 'note', run: true }
]

const topDots = Array.from({ length: 14 }, (_, i) => 933 + i * 12)
const sideDots = [292, 307, 321, 335, 350, 364]
</script>

<style>
html, body { margin: 0; padding: 0; background: #f0f0f0; overflow: hidden; }
</style>

<style scoped>
.app {
  position: relative;
  width: 1366px;
  height: 768px;
  overflow: hidden;
  display: flex;
  flex-direction: column;
  background: #f0f0f0;
  color: #000;
  font: 12px "Liberation Sans", "Noto Sans CJK SC", sans-serif;
}
.sheet { position: absolute; }
.ic { width: 16px; height: 16px; flex: none; }
.caret {
  display: inline-block;
  width: 0;
  height: 0;
  margin: 0 1px 0 5px;
  border: 3px solid transparent;
  border-top: 3px solid #222;
  border-bottom: 0;
  flex: none;
}
.caret.gray { border-top-color: #888; }
.more { font-size: 13px; font-weight: 700; line-height: 10px; align-self: flex-start; margin-top: 5px; }

.titlebar { height: 24px; display: flex; align-items: center; background: #fff; color: #777; padding-left: 4px; flex: none; }
.app-logo { width: 20px; height: 16px; }
.title-text { font-size: 12.65px; white-space: nowrap; }
.win-btns { margin-left: auto; display: flex; gap: 33px; padding-right: 18px; }

.menubar { height: 30px; display: flex; align-items: center; gap: 10px; background: #f5f5f5; padding: 0 0 4px 7px; box-sizing: border-box; flex: none; position: relative; white-space: nowrap; }
.menu-item { color: #111; }
.menu-tool { display: flex; align-items: center; gap: 2px; margin-left: 1px; }
.menu-tool.first { margin-left: 3px; margin-right: -7px; }
.menu-tool.second { gap: 5px; }
.news { width: 187px; height: 30px; line-height: 26px; background: #f8f8f8; color: #3a7a10; padding-left: 29px; box-sizing: border-box; margin: 4px 0 0 -3px; }
.account { display: flex; align-items: center; gap: 5px; margin-left: -5px; }
.phone { font-size: 12.5px; }
.bell { margin-left: 2px; }
.menu-more { position: absolute; right: 3px; top: 6px; margin: 0; }

.toolrow { height: 27px; display: flex; gap: 2px; flex: none; background: #f0f0f0; }
.seg { display: flex; align-items: center; background: #f8f8f8; height: 27px; flex: none; }
.seg-file { width: 149px; padding-left: 4px; box-sizing: border-box; gap: 2px; }
.seg-file .open { margin-left: 6px; }
.seg-file .save { margin-left: 2px; }
.seg-file .more { margin-left: 17px; }
.vsep { width: 1px; height: 22px; background: #c8c8c8; flex: none; margin: 0 4px; }
.seg-draw { width: 552px; padding-left: 6px; box-sizing: border-box; gap: 8px; }
.seg-view { flex: 1; padding-left: 0; gap: 8px; min-width: 0; }
.seg-view .vsep { margin: 0 -2px; }
.seg-view .vsep.tight { margin-left: -6px; }
.seg-view .dim-box { margin-right: -3px; }
.seg-view .tool .caret { margin-left: 2px; }
.push { margin-left: auto; margin-right: 3px; }
.tool { display: inline-flex; align-items: center; gap: 3px; white-space: nowrap; color: #111; flex: none; }
.tool.off { color: #9a9a9a; }
.sigma { width: 16px; text-align: center; font-size: 13px; }
.dim-box { width: 62px; height: 21px; border: 1px solid #555; display: inline-flex; align-items: center; color: #888; gap: 2px; padding-left: 3px; box-sizing: border-box; white-space: nowrap; flex: none; }
.swatch { width: 14px; height: 12px; background: #e4e4e4; border: 1px solid #ccc; flex: none; box-sizing: border-box; }

.workspace { flex: 1; display: flex; min-height: 0; }
.nav { width: 139px; flex: none; display: flex; flex-direction: column; padding-top: 4px; box-sizing: border-box; }
.nav-head { height: 14px; line-height: 14px; display: flex; font-size: 13px; position: relative; }
.pin { position: absolute; left: 108px; font-size: 10px; }
.x { position: absolute; left: 126px; color: #555; }
.nav-btn {
  height: 22px;
  margin: 1px 0 0;
  padding: 0;
  background: #f0f0f0;
  border: 1px solid #aaa;
  border-width: 1px 1px 1px 0;
  font: inherit;
  flex: none;
  color: #000;
}
.tree-tools { height: 26px; flex: none; margin-top: 1px; display: flex; align-items: center; padding-left: 7px; background: #f8f8f8; }
.tree-box { position: relative; flex: 1; min-height: 0; margin: 0 0 1px 2px; border: 1px solid #999; background: #f0f0f0; height: 487px; }
.tree-view { position: absolute; left: 0; top: 0; width: 117px; height: 468px; overflow: hidden; background: #fff; }
.row { height: 16px; position: relative; display: flex; align-items: center; white-space: nowrap; font-family: "Noto Sans CJK SC", sans-serif; font-size: 12px; }
.chev { width: 6px; height: 6px; border: solid #444; border-width: 0 2px 2px 0; transform: rotate(45deg) translate(-2px, -2px); flex: none; }
.chev.closed { transform: rotate(-45deg) translate(-1px, 0); border-color: #aaa; }
.row.group { padding-left: 9px; }
.folder { margin-left: 7px; }
.group-name { margin-left: 5px; font-size: 13px; line-height: 16px; }
.guide { position: absolute; left: 30px; top: 0; width: 12px; height: 100%; border-left: 1px dotted #666; box-sizing: border-box; }
.guide::after { content: ""; position: absolute; left: 0; top: 8px; width: 11px; border-top: 1px dotted #666; }
.guide.last { height: 9px; }
.row:not(.group)::before { content: ""; position: absolute; left: 11px; top: 0; height: 100%; border-left: 1px dotted #666; }
.leaf { position: absolute; left: 42px; top: 0; height: 16px; right: 0; display: flex; align-items: center; gap: 5px; }
.leaf.hot { background: #d9d9d9; }
.leaf-name { white-space: nowrap; line-height: 16px; }
.code { font: 11.500px "Liberation Mono", monospace; letter-spacing: -.9px; }
.vbar { position: absolute; left: 117px; top: 0; width: 16px; height: 468px; background: #f0f0f0; }
.thumb { position: absolute; top: 119px; left: 0; width: 15px; height: 293px; background: #c8c8c8; }
.sb-up, .sb-down, .sb-left, .sb-right { position: absolute; width: 5px; height: 5px; border: solid #555; }
.sb-up { left: 5px; top: 7px; border-width: 2px 0 0 2px; transform: rotate(45deg); }
.sb-down { left: 5px; bottom: 6px; border-width: 0 2px 2px 0; transform: rotate(45deg); }
.sb-left { left: 6px; top: 5px; border-width: 0 0 2px 2px; transform: rotate(45deg); }
.sb-right { right: 6px; top: 5px; border-width: 2px 2px 0 0; transform: rotate(45deg); }
.hbar { position: absolute; left: 0; top: 468px; width: 117px; height: 16px; background: #f0f0f0; }
.hthumb { position: absolute; left: 18px; top: 0; width: 63px; height: 16px; background: #c8c8c8; }

.content { flex: 1; min-width: 0; display: flex; flex-direction: column; padding-left: 9px; }
.bar2 { height: 27px; margin-top: 3px; display: flex; align-items: center; gap: 8px; background: #f8f8f8; flex: none; padding-left: 1px; white-space: nowrap; }
.bar2 .vsep { margin: 0 -1px; }
.bar2 .vsep.tight { margin-left: -5px; }
.bar2 .caret { margin: 0; }
.bar2 .near { margin-left: -5px; }
.bar2 .combo .caret { margin-left: 11px; }
.panes { flex: 1; min-height: 0; display: flex; gap: 8px; padding: 4px 0 3px 0; }
.list-pane { width: 182px; flex: none; display: flex; flex-direction: column; margin-left: -2px; }
.search { height: 23px; line-height: 22px; border: 1px solid #999; background: #fff; color: #888; padding-left: 3px; font-size: 13px; flex: none; box-sizing: border-box; width: 100%; margin-left: 1px; }
.list-box { flex: 1; min-height: 0; margin-top: 1px; border: 1px solid #999; background: #fff; position: relative; overflow: hidden; }
.list-tree { padding: 4px 0 0 26px; }
.lrow { height: 16px; display: flex; align-items: center; position: relative; white-space: nowrap; font: 11.500px "Liberation Mono", monospace; letter-spacing: -.9px; }
.lrow .chev { margin-left: 1px; }
.lrow .ic.small { width: 13px; height: 13px; position: absolute; left: 16px; top: 2px; }
.ldots { position: absolute; left: 5px; top: 0; height: 16px; border-left: 1px dotted #666; }
.ldots.elbow { height: 8px; width: 10px; border-bottom: 1px dotted #666; }
.ct { position: absolute; left: 36px; top: 0; line-height: 16px; }
.child .ic.small { left: 36px; }
.child .ct { left: 54px; }
.elbow2 { left: 24px; height: 8px; width: 10px; border-bottom: 1px dotted #666; }
.sel { position: absolute; left: 13px; top: 0; width: 57px; height: 16px; background: #2d60bf; color: #fff; }
.sel .ic.small { left: 3px; }
.sel .ct { left: 23px; }
.list-bar { position: absolute; right: 0; top: 0; bottom: 0; width: 16px; background: #f0f0f0; }
.list-thumb { position: absolute; left: 0; top: 300px; bottom: 16px; width: 15px; background: #c8c8c8; }
.canvas-pane { flex: 1; background: #fff; border: 1px solid #aaa; box-shadow: inset 0 0 0 1px #ddd; }

.status { height: 20px; flex: none; display: flex; gap: 3px; background: #f0f0f0; }
.cell { border: 1px solid #ddd; background: #f4f4f4; box-sizing: border-box; font: 11.500px/18px "Liberation Mono", monospace; letter-spacing: -.9px; padding-left: 1px; white-space: nowrap; overflow: hidden; }
.zh, .cell.zh { font-family: "Noto Sans CJK SC", sans-serif; font-size: 12px; letter-spacing: 0; }
.c1 { width: 148px; }
.c2 { width: 77px; }
.c3 { width: 97px; }
.c4 { width: 47px; }
.c5 { width: 912px; }
.c6 { flex: 1; }

.taskbar { height: 40px; flex: none; display: flex; align-items: center; background: #0c171d; color: #fff; position: relative; }
.start { width: 48px; height: 40px; background: #000; display: flex; align-items: center; justify-content: center; flex: none; }
.start svg { margin-left: -24px; }
.tsearch { width: 343px; height: 40px; background: #333; display: flex; align-items: center; color: #888; font-size: 13px; position: relative; flex: none; }
.cortana { width: 12px; height: 12px; border: 3px solid #ddd; border-radius: 50%; margin: 0 7px 0 10px; }
.mic { position: absolute; left: 317px; top: 11px; }
.tasks { display: flex; margin-left: 2px; }
.task { width: 47.5px; height: 40px; display: flex; align-items: center; justify-content: center; position: relative; flex: none; }
.task:nth-child(3) { margin-left: 6px; }
.task.run::after { content: ""; position: absolute; left: 5px; right: 5px; bottom: 0; height: 3px; background: #7ab8ee; }
.task.active { background: #3b4448; }
.glyph { font-family: "Liberation Sans", sans-serif; font-weight: 700; font-size: 34px; line-height: 34px; margin-top: -6px; }
.edge { color: #0f78d4; }
.ie { color: #1f9be0; text-shadow: 0 0 1px #f2c230; }
.gg { color: #2aa2e8; font-size: 28px; font-style: italic; margin-top: 0; }
.gg.red { color: #2a8bd0; text-shadow: 3px 3px 0 #e0606a; }
.helpq { position: relative; width: 24px; height: 26px; }
.helpq i { position: absolute; left: 2px; top: 8px; width: 10px; height: 15px; background: #e8e8e8; }
.helpq b { position: absolute; left: 10px; top: -3px; color: #ffe600; font-size: 22px; }
.cpu { position: absolute; left: 985px; width: 60px; top: 3px; display: flex; flex-direction: column; align-items: center; gap: 2px; line-height: 16px; }
.tray { position: absolute; left: 0; top: 0; height: 40px; width: 100%; pointer-events: none; }
.tray > * { position: absolute; top: 12px; }
.tray > svg:first-child { left: 1059px; top: 15px; }
.t-power { left: 1081px; }
.t-wifi { left: 1106px; }
.t-vol { left: 1129px; }
.t-kbd { left: 1153px; }
.t-ime { left: 1186px; top: 11px; font-size: 13px; }
.t-s { left: 1213px; top: 10px; width: 14px; height: 18px; background: #e8512a; border-radius: 4px; text-align: center; line-height: 18px; font-weight: 700; font-size: 14px; }
.clock { position: absolute; left: 1240px; width: 70px; top: 3px; display: flex; flex-direction: column; align-items: center; gap: 3px; line-height: 16px; }
.notify { position: absolute; left: 1325px; top: 8px; }
.badge { position: absolute; left: 5px; top: 6px; width: 22px; height: 22px; border-radius: 50%; background: #3c4a50; border: 1px solid #888; text-align: center; line-height: 21px; font-size: 12px; box-sizing: border-box; }

.ime { position: absolute; left: 855px; top: 3px; width: 183px; height: 24px; display: flex; align-items: center; gap: 8px; background: #fff; border: 1px solid #b8d4ec; box-sizing: border-box; padding-left: 30px; }
.ime-tab { position: absolute; left: 25px; top: -4px; width: 44px; height: 3px; background: #4ab868; }
.ime-s { position: absolute; left: 0; top: -1px; width: 26px; height: 26px; background: #ee4f1c; color: #fff; border-radius: 5px; font: 700 24px/26px "Liberation Sans", sans-serif; text-align: center; transform: rotate(-4deg); }
.ime-zh { color: #1a6fc0; font-size: 16px; font-weight: 700; }
.ime-dot { color: #1a6fc0; font-weight: 700; font-size: 13px; }
.ime-pull { margin-left: -3px; }

.dialog { position: absolute; left: 192px; top: 113px; width: 981px; height: 533px; border: 1px solid #4a9ae8; box-sizing: border-box; background: #f0f0f0; box-shadow: 0 3px 14px rgba(0, 0, 0, .3); display: flex; flex-direction: column; }
.dlg-title { height: 31px; background: #fff; display: flex; align-items: center; padding-left: 8px; flex: none; }
.dlg-name { margin-left: 5px; font-size: 12px; }
.dlg-btns { margin-left: auto; display: flex; gap: 35px; padding-right: 16px; }
.dlg-body { flex: 1; min-height: 0; display: flex; }
.shapes { width: 290px; flex: none; display: flex; flex-direction: column; position: relative; }
.legend { height: 19px; flex: none; position: relative; }
.legend::before { content: ""; position: absolute; left: 0; right: 0; top: 6px; border-top: 1px solid #d4d4d4; }
.legend span { position: absolute; left: 8px; top: 0; padding-right: 3px; line-height: 15px; }
.shape-wrap { position: relative; flex: 1; min-height: 0; overflow: hidden; padding-left: 6px; }
.grid { display: grid; grid-template-columns: 128px 128px; grid-auto-rows: 144px; column-gap: 3px; row-gap: 4px; width: 262px; }
.cell-t { width: 122px; height: 139px; padding: 2px 3px 3px 3px; border: 1px solid #bbb; border-width: 0 1px 1px 0; background: #f4f4f4; }
.cell-t svg { display: block; background: #6f93a8; }
.chosen svg { outline: 3px solid #0ff; outline-offset: -1px; }
.thumb-svg { width: 122px; height: 139px; }
.shape-bar { position: absolute; left: 270px; top: 0; bottom: 0; width: 16px; background: #f0f0f0; }
.shape-thumb { position: absolute; left: 0; top: 12px; width: 15px; height: 158px; background: #c8c8c8; }
.preview { flex: 1; min-width: 0; display: flex; flex-direction: column; border-left: 1px solid #666; }
.radios { height: 30px; flex: none; background: #f0f0f0; border-bottom: 1px solid #a8a8a8; display: flex; padding: 1px 0 0 171px; gap: 137px; align-items: center; box-sizing: border-box; }
.radio { display: flex; align-items: center; gap: 3px; }
.dot { width: 11px; height: 11px; border: 1px solid #444; border-radius: 50%; box-sizing: border-box; background: #fff; position: relative; }
.dot.on::after { content: ""; position: absolute; left: 2px; top: 2px; width: 5px; height: 5px; border-radius: 50%; background: #222; }
.cad { display: block; }
.dlg-foot { height: 37px; flex: none; display: flex; align-items: center; padding: 2px 25px 0 337px; border-top: 1px solid #aaa; box-sizing: border-box; }
.dlg-btn { width: 89px; height: 24px; background: #e1e1e1; border: 1px solid #adadad; font: inherit; padding: 0; margin-left: 15px; color: #000; }
.dlg-btn.form { margin-left: 0; }
.dlg-btn.ok { margin-left: auto; }

.yl { fill: none; stroke: #ff0; }
.bk { fill: none; stroke: #000; }
.hatch path { fill: none; stroke: #fff; }
.wt { fill: #fff; font: 13px "Liberation Serif", serif; }
.wm { fill: #fff; font: 13.300px "Liberation Mono", monospace; }
.blue { fill: #3a2f82; font-family: "Noto Sans CJK SC", sans-serif; }
.f12 { font-size: 8.500px; }
.f16 { font-size: 14px; }
.f18 { font-size: 19px; }
.f20 { font-size: 20px; }
.ol { fill: none; stroke: #abb05c; stroke-width: 1; }
.ol2 { fill: #8f9c80; stroke: #c3c35a; }
.ol3 { fill: none; stroke: #c3c35a; }
.dk { fill: none; stroke: #2f4252; }
.ar { fill: #151c22; }
.green { fill: #0f0; font-family: "Liberation Sans", sans-serif; }
.cad-t { fill: #fff; font-family: "Liberation Serif", serif; }
.cad-c { fill: #fff; font-family: "Noto Sans CJK SC", sans-serif; }
.bold { font-weight: 500; }
.wide { letter-spacing: 3px; }
</style>
